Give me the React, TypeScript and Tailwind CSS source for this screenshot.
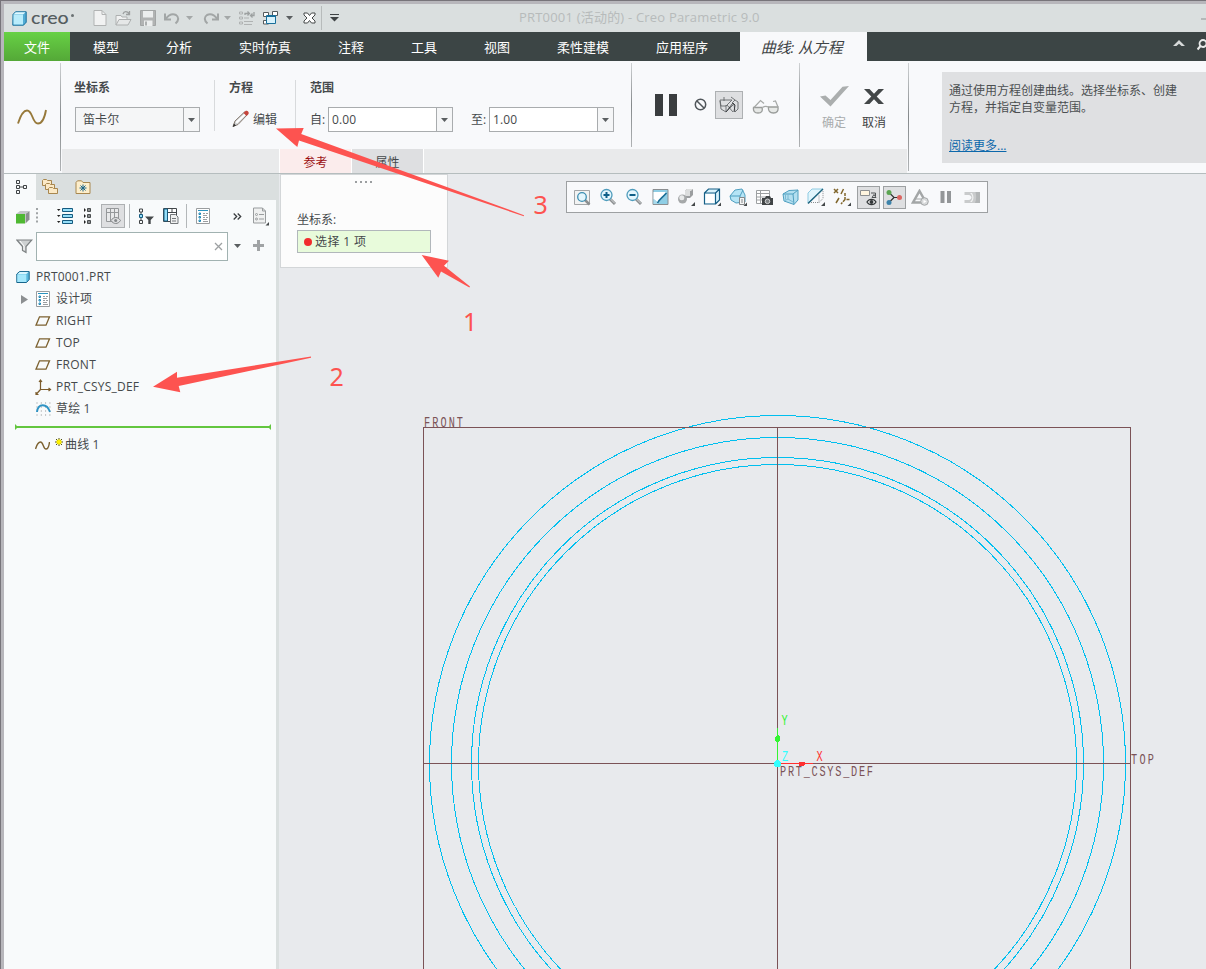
import type { ReactNode } from 'react'

type IconProps = { w: number; h: number; className?: string; children: ReactNode }

function Icon({ w, h, className = '', children }: IconProps) {
  return (
    <svg width={w} height={h} viewBox={`0 0 ${w} ${h}`} fill="none" className={`shrink-0 ${className}`}>
      {children}
    </svg>
  )
}

function Caret({ className = '', color = '#5a5e60' }: { className?: string; color?: string }) {
  return (
    <Icon w={7} h={4} className={className}>
      <path d="M0 0h7L3.500 4z" fill={color} />
    </Icon>
  )
}

function CubeIcon({ className = '' }: { className?: string }) {
  return (
    <Icon w={14} h={12} className={className}>
      <path d="M.8 3 3.500.6h9.700v7.900l-2.700 3H.8z" fill="#5bb9dd" stroke="#17658c" />
      <path d="M1.300 3.300h9v7.700h-9z" fill="#a5e8fc" />
      <path d="M1.600 3 3.800 1.100h8.700L10.300 3z" fill="#d8f6ff" />
    </Icon>
  )
}

function DesignListIcon({ className = '' }: { className?: string }) {
  return (
    <Icon w={14} h={16} className={className}>
      <path d="M.5.5h13v15H.5z" fill="#fff" stroke="#9a9d9f" />
      <path d="M2 2.5h10" stroke="#2b93bf" />
      <path d="M3 5h1.500v1.500H3zM3 8.500h1.500V10H3zM3 12h1.500v1.500H3z" stroke="#1c86b5" />
      <path d="M7 5.500h2m1 0h2M7 7.500h4M7 9.500h2m1 0h2M7 11.500h4M7 13.500h5" stroke="#9a9ea1" />
    </Icon>
  )
}

function PlaneIcon() {
  return (
    <Icon w={16} h={10}>
      <path d="M4.500.8h10L11 9.200H1z" stroke="#7c6130" strokeWidth="1.300" />
    </Icon>
  )
}

function Magnifier({ sign }: { sign: string }) {
  return (
    <Icon w={18} h={18}>
      <path d="m11 11 5 5" stroke="#8c8f91" strokeWidth="3" />
      <path d="m11.500 11 4.500 4.500" stroke="#d9dbdc" />
      <circle cx="7.500" cy="7" r="5.500" fill="#e4f6fd" stroke="#4f9cbc" strokeWidth="1.300" />
      <path d={sign} stroke="#0f5f88" strokeWidth="2" />
    </Icon>
  )
}

const MENU = ['模型', '分析', '实时仿真', '注释', '工具', '视图', '柔性建模', '应用程序']

function TitleBar() {
  return (
    <div className="relative flex h-7 shrink-0 items-center bg-[#dadfdf]">
      <Icon w={15} h={15} className="ml-2">
        <path d="M1 3.500 3.500.8h10.700v10.400l-2.700 3H.8z" fill="#52acd4" stroke="#176f9c" />
        <path d="M1.500 3.500h9.500v10H1.500z" fill="#b9ecfb" />
        <path d="M1.600 3.200 3.800 1.200h9.700l-2.200 2z" fill="#e0f8ff" />
      </Icon>
      <span className="ml-[4px] w-[42px] origin-left scale-x-[1.09] font-['Lato',sans-serif] text-[18px] leading-[18px] -mt-[3px] font-medium text-[#555d5f]">creo</span>
      <i className="-ml-[2px] -mt-[6px] size-[3px] rounded-full bg-[#6b7274]" />
      <Icon w={14} h={16} className="ml-[19px]">
        <path d="M1 .5h8l4 4v11H1z" fill="#f1f2f2" stroke="#b1b3b3" />
        <path d="M9 .5v4h4" stroke="#b1b3b3" />
      </Icon>
      <Icon w={17} h={17} className="ml-[8px]">
        <path d="M1 15V5.500h5l1 1.500h5v3" fill="#f0f1f1" stroke="#adb0b0" />
        <path d="m1 15 3-5.500h12L13 15z" fill="#e5e7e7" stroke="#adb0b0" />
        <path d="M8 4c1-3 4-3 6-.5M14.500 1v3.500H11" stroke="#9c9f9f" strokeWidth="1.300" />
      </Icon>
      <Icon w={16} h={16} className="ml-[8px]">
        <path d="M.5.5h15v15H.5z" fill="#b1b3b3" stroke="#a2a5a5" />
        <path d="M3 1h10v6.500H3zM4 10.500h8.500V16H4z" fill="#eceeee" />
        <path d="M6 11.500v4" stroke="#979a9a" strokeWidth="1.500" />
      </Icon>
      <Icon w={17} h={14} className="ml-[8px] mt-[2px]">
        <path d="M1 1.500v6h6M1.500 7C5 2.500 9 1.500 12 3c3 2 3 5.500-.5 8.500" stroke="#a2a6a6" strokeWidth="2" />
      </Icon>
      <Caret className="ml-[5px]" color="#a4a8a8" />
      <Icon w={17} h={14} className="ml-[9px] mt-[2px]">
        <path d="M16 1.500v6h-6M15.500 7C12 2.500 8 1.500 5 3c-3 2-3 5.500.5 8.500" stroke="#a2a6a6" strokeWidth="2" />
      </Icon>
      <Caret className="ml-[5px]" color="#a4a8a8" />
      <Icon w={17} h={16} className="ml-[8px]">
        <path d="M.5 2h3v2h-3zM.5 7h3v2h-3zM.5 12h3v2h-3z" stroke="#b0b3b3" />
        <path d="M5 8h5M5 11.500h9M5 14.500h8" stroke="#b0b3b3" />
        <path d="M6 5V3.500h4M8.500 1.500l2 2-2 2M15 2v3.500h-3M13.500 3.500l-2 2 2 2" stroke="#9da1a1" strokeWidth="1.300" />
      </Icon>
      <Icon w={16} h={16} className="ml-[7px]">
        <path d="M.5 2.500h5v4h-5zM9.500 1.500h5v4h-5zM.5 10.500h5V14h-5z" fill="#fff" stroke="#555a5c" />
        <path d="M3.500 5.500h9v8h-9z" fill="#d8f2fc" stroke="#186f9a" />
        <path d="M3.500 6.500h9" stroke="#186f9a" />
      </Icon>
      <Caret className="ml-[7px]" />
      <Icon w={13} h={12} className="ml-[10px]">
        <path d="M1 1h3.500l2 2.500L8.500 1H12v2L9 6l3 3v2H8.500l-2-2.500-2 2.500H1V9l3-3-3-3z" fill="#fff" stroke="#454949" />
      </Icon>
      <i className="ml-[5px] h-[24px] w-px bg-[#b7bbbb]" />
      <Icon w={9} h={8} className="ml-[8px]">
        <path d="M0 .5h9" stroke="#3e4244" />
        <path d="M0 3h9L4.500 7.500z" fill="#3e4244" />
      </Icon>
      <span className="ml-[180px] whitespace-nowrap text-[13px] tracking-[0.2px] text-[#b7bbbb]">PRT0001 (活动的) - Creo Parametric 9.0</span>
      <i className="ml-auto mt-[2px] h-[2px] w-[5px] bg-[#b4b8b8]" />
    </div>
  )
}

function MenuBar() {
  return (
    <div className="flex h-[29px] shrink-0 items-center bg-[#3c4545] text-[13px] text-white">
      <div className="flex h-full w-[66px] items-center justify-center bg-linear-to-b from-[#67d145] to-[#54a837] pt-[2px]">文件</div>
      <div className="-ml-[0.5px] flex pt-[2px]">
        {MENU.map(item => (
          <span key={item} className="px-[23.5px] whitespace-nowrap">{item}</span>
        ))}
      </div>
      <div className="ml-[8px] flex h-full w-[127px] items-center justify-center bg-[#f8f9fb] pt-[2px] pr-[3px] text-[15px] tracking-[-0.1px] whitespace-nowrap text-[#3e4345] italic">曲线: 从方程</div>
      <Icon w={12} h={6} className="-mt-[7px] ml-auto">
        <path d="M0 6 6 0l6 6H8.500L6 3.800 3.500 6z" fill="#d6d9d9" />
      </Icon>
      <Icon w={9} h={12} className="-mt-[3px] ml-[12px]">
        <circle cx="6" cy="4.500" r="3.500" stroke="#e8eaea" strokeWidth="1.800" />
        <path d="M3.500 7 .5 10.500" stroke="#e8eaea" strokeWidth="2.200" />
      </Icon>
    </div>
  )
}

function Combo({ value, className }: { value: string; className: string }) {
  return (
    <div className={`flex h-[25px] w-[125px] items-center border border-[#a9acae] ${className}`}>
      <span className="flex-1 tracking-[0.1px]">{value}</span>
      <span className="flex h-full w-[16px] items-center justify-center border-l border-[#a9acae] bg-[#f5f6f7]">
        <Caret />
      </span>
    </div>
  )
}

function Ribbon() {
  return (
    <div className="flex h-[113px] shrink-0 border-b border-[#b5bdbe] bg-[#f8f9fb] text-[12px] text-[#45494b]">
      <div className="flex w-[56px] items-center justify-center">
        <Icon w={30} h={16}>
          <path d="M1 14.500C4 5 6.500 1.500 10 1.500c6 0 5 13 11 13 4 0 6.500-5 8-13.500" stroke="#97793a" strokeWidth="1.900" />
        </Icon>
      </div>
      <i className="mt-[2px] h-[108px] w-px bg-linear-to-b from-[#cfd2d4] via-[#85898b] to-[#b0b3b5]" />
      <div className="ml-px flex w-[845px] flex-col">
        <div className="flex h-[88px]">
          <div className="ml-[13px] w-[139px] pt-[17px]">
            <div className="mb-[11px] h-[18px] leading-[20px] font-bold -ml-px">坐标系</div>
            <Combo value="笛卡尔" className="bg-[#f5f6f7] pl-[7px]" />
          </div>
          <i className="mt-[19px] h-[51px] w-px bg-[#d8dadc]" />
          <div className="ml-[14px] w-[66px] pt-[17px]">
            <div className="mb-[11px] h-[18px] leading-[20px] font-bold">方程</div>
            <div className="flex h-[25px] items-center">
              <Icon w={18} h={18} className="ml-[3px] -mt-px">
                <path d="m1 16.500 2-5.500L12.500 2l3 2.500-9.500 10z" fill="#d2d4d5" stroke="#85796f" />
                <path d="m3.500 12 9-8.500 1.500 1.200-9 8.800z" fill="#fff" />
                <path d="m11.500 3 2-2c1.500-.8 4 1 3 3l-2 2z" fill="#c5453c" />
                <path d="m.7 17 1.300-3.500 2 2z" fill="#333" />
              </Icon>
              <span className="ml-[3px]">编辑</span>
            </div>
          </div>
          <i className="mt-[19px] h-[51px] w-px bg-[#d8dadc]" />
          <div className="ml-[14px] w-[321px] pt-[17px]">
            <div className="mb-[11px] h-[18px] leading-[20px] font-bold">范围</div>
            <div className="flex items-center">
              <span className="w-[18px]">自:</span>
              <Combo value="0.00" className="bg-white pl-[3px]" />
              <span className="ml-[18px] w-[18px]">至:</span>
              <Combo value="1.00" className="bg-white pl-[3px]" />
            </div>
          </div>
          <i className="mt-[2px] h-[84px] w-px bg-linear-to-b from-[#cfd2d4] via-[#85898b] to-[#b0b3b5]" />
          <div className="flex w-[167px] items-center">
            <Icon w={22} h={22} className="ml-[23px] -mt-px">
              <path d="M0 0h8v22H0zM14 0h8v22h-8z" fill="#3a3d3f" />
            </Icon>
            <Icon w={13} h={13} className="ml-[17px] -mt-px">
              <circle cx="6.500" cy="6.500" r="5.200" stroke="#50565a" strokeWidth="1.500" />
              <path d="m3 3 7 7" stroke="#50565a" strokeWidth="1.500" />
            </Icon>
            <div className="ml-[8px] flex size-7 items-center justify-center border border-[#adb0b2] bg-[#dedfe1]">
              <Icon w={20} h={18}>
                <path d="M1 4h12l-6 6H2zM1 5l1 8 5 3V9M7 16l8-8M8 9l6 7M15 8l1 8 3-3V6l-3-2-3 3M5 1v4M12 1l4 3" stroke="#65696b" strokeWidth=".9" />
                <path d="m7 16 7-9 2 2-1 7" stroke="#33373a" strokeWidth=".9" />
              </Icon>
            </div>
            <Icon w={28} h={16} className="ml-[9px] mt-[4px]">
              <path d="M1.500 8.500h8.500c1 3.500-.5 5.500-4 5.500s-5-2-4.500-5.500zM16.500 8h9.500c.5 4-1 6-4.500 6s-5.500-2-5-6z" fill="#e6e8e6" stroke="#9a9d9b" strokeWidth="1.300" />
              <path d="M10.500 8.500c2-1.500 4-1.500 6-.5M2 8.500 8.500 1.500l3.500 3M26 8l-2.500-6-2.500.5" stroke="#a5a8a6" strokeWidth="1.200" />
            </Icon>
          </div>
          <i className="mt-[2px] h-[84px] w-px bg-linear-to-b from-[#cfd2d4] via-[#85898b] to-[#b0b3b5]" />
          <div className="ml-[20px] mt-[25px] flex w-[28px] flex-col items-center text-[#a9acad]">
            <Icon w={29} h={21}>
              <path d="m0 10.500 5.500-1L10.500 14 22.500.8 29 0 10.500 20.500z" fill="#abaeae" />
            </Icon>
            <span className="mt-[7px] leading-[18px]">确定</span>
          </div>
          <div className="ml-[12px] mt-[25px] flex w-[28px] flex-col items-center text-[#3e4244]">
            <Icon w={20} h={21}>
              <path d="M0 3h5.500L10 7.800 14.500 3H20l-7.300 7.500L20 18h-5.500L10 13.200 5.500 18H0l7.300-7.500z" fill="#434748" />
            </Icon>
            <span className="mt-[7px] leading-[18px]">取消</span>
          </div>
        </div>
        <div className="flex h-6 bg-[#e9eaeb]">
          <div className="ml-[217px] flex w-[73px] items-center justify-center border-x border-white bg-[#fbecec] pt-[3px] text-[#9c0f10]">参考</div>
          <div className="flex w-[72px] items-center justify-center border-r border-white bg-[#dedfe1] pt-[3px]">属性</div>
        </div>
      </div>
      <i className="ml-px mt-[2px] h-[108px] w-px bg-linear-to-b from-[#cfd2d4] via-[#85898b] to-[#b0b3b5]" />
      <div className="ml-[33px] mt-[11px] h-[91px] flex-1 bg-[#dfe0e2] pl-[7px] pt-[10px] leading-[17px] text-[#4b4f51]">
        <p className="w-[232px]">通过使用方程创建曲线。选择坐标系、创建<br />方程，并指定自变量范围。</p>
        <a className="mt-[21px] inline-block text-[#0c68ab] underline">阅读更多...</a>
      </div>
    </div>
  )
}

function TreeToolbar() {
  return (
    <>
      <div className="flex h-[26px] bg-[#dadfdf]">
        <div className="flex w-8 items-center bg-[#f8fafb] pl-3">
          <Icon w={12} h={16}>
            <path d="M.5 1.500h3v3h-3zM.5 6.500h3v3h-3zM.5 11.500h3v3h-3zM7.500 6.500h3v3h-3zM4 8h3" stroke="#3f4345" />
          </Icon>
        </div>
        <Icon w={17} h={17} className="ml-[6px] mt-[5px]">
          {[0, 4, 8].map(d => (
            <path key={d} d={`M${d * 0.75 + 0.5} ${d + 1.5}l1-1h3l1 1h4v5h-9z`} fill="#fbe9c6" stroke="#a8874f" />
          ))}
        </Icon>
        <Icon w={16} h={14} className="ml-[16px] mt-[6px]">
          <path d="M1 2.500 2.500.8h4L8 2.500h7v11H1z" fill="#fdeecb" stroke="#a8874f" />
          <path d="M8 4.500v7M4.500 8h7M5.500 5.500l5 5M10.500 5.500l-5 5" stroke="#1a6488" />
        </Icon>
      </div>
      <div className="flex h-[32px] items-center">
        <Icon w={14} h={14} className="ml-[12px] mt-[2px]">
          <path d="M0 4h9v9.500H0z" fill="#4fb832" />
          <path d="m0 4 4-3h9.500L9 4z" fill="#c3c6c6" />
          <path d="m9.500 4 4-3v8.500l-4 4z" fill="#8b8e8e" />
        </Icon>
        <Icon w={2} h={16} className="ml-[6px]">
          <path d="M1 0v16" stroke="#a0a4a6" strokeWidth="2" strokeDasharray="2 2.200" />
        </Icon>
        <Icon w={16} h={16} className="ml-[19px]">
          <path d="M0 1h3.500L1.700 3zM0 7h3.500L1.700 9zM0 13h3.500L1.700 15z" fill="#222" />
          <path d="M5.500.500h10v3h-10zM5.500 6.500h10v3h-10zM5.500 12.500h10v3h-10z" fill="#95def8" stroke="#155a7f" />
        </Icon>
        <Icon w={9} h={16} className="ml-[10px]">
          <path d="M1 0l2 2-2 2zM1 6l2 2-2 2zM1 12l2 2-2 2z" fill="#222" />
          <path d="M4.500.500h3v3h-3zM4.500 6.500h3v3h-3zM4.500 12.500h3v3h-3z" fill="#8b8e90" stroke="#4a4e50" />
        </Icon>
        <div className="ml-[9px] flex size-6 items-center justify-center border border-[#adb0b2] bg-[#dedfe1]">
          <Icon w={16} h={16}>
            <path d="M1.500.500h12v13h-12z" fill="#e8e9ea" stroke="#95989a" />
            <path d="M1.500 4.500h12M5.500.500v13M9.500.500v13" stroke="#95989a" />
            <path d="M6 12.500c2.500-4 7-4 9.500 0-2.500 4-7 4-9.500 0z" fill="#dedfe1" stroke="#85888a" />
            <circle cx="10.700" cy="12.500" r="1.500" fill="#85888a" />
          </Icon>
        </div>
        <i className="ml-[4px] h-6 w-px bg-[#b3b7b9]" />
        <Icon w={16} h={17} className="ml-[8px]">
          <path d="M1.500 1h3v3h-3zM1.500 12.500h3v3h-3zM3 4v8" stroke="#3f4345" />
          <path d="M1.500 6.500h3v3h-3z" fill="#95def8" stroke="#155a7f" />
          <path d="M7 8.500h9l-3.300 3.500v4h-2.400v-4z" fill="#44484a" />
        </Icon>
        <Icon w={16} h={16} className="ml-[9px]">
          <path d="M.5.500h13v13H.500z" fill="#fff" stroke="#42474a" />
          <path d="M1 1h3.500v12H1z" fill="#95def8" stroke="#155a7f" />
          <path d="M5 4.500h8M9 1v3" stroke="#42474a" />
          <path d="M7.500 6.500h5l2.500 2.500v6.500H7.500z" fill="#f0f1f1" stroke="#73777a" />
          <path d="M9 10.500h4M9 13h4" stroke="#73777a" />
        </Icon>
        <i className="ml-[7px] h-6 w-px bg-[#b3b7b9]" />
        <DesignListIcon className="ml-[9px]" />
        <Icon w={9} h={7} className="ml-[23px]">
          <path d="m.7.500 3 3-3 3M4.700.500l3 3-3 3" stroke="#3a3e40" strokeWidth="1.300" />
        </Icon>
        <Icon w={17} h={19} className="ml-[10px]">
          <path d="M1.500 1h9l3 3v12h-12z" fill="#eff0f0" stroke="#999c9e" />
          <path d="M10.500 1v3h3" stroke="#999c9e" />
          <circle cx="4.500" cy="7.500" r="1" stroke="#999c9e" />
          <circle cx="4.500" cy="12" r="1" stroke="#999c9e" />
          <path d="M7 7.500h5M7 12h5" stroke="#999c9e" />
          <path d="M17 15v3.500h-3.500z" fill="#44484a" />
        </Icon>
      </div>
      <div className="flex h-[29px] items-center">
        <Icon w={17} h={15} className="ml-[12px]">
          <path d="M.8 1h15L10 7.500v6l-3.500-2v-4z" fill="#ced1d2" stroke="#7c8082" strokeWidth="1.200" />
          <path d="m4 2 4 5v4" stroke="#fff" />
        </Icon>
        <div className="ml-[3px] flex h-[29px] w-[192px] items-center justify-end border border-[#a1b2b1] bg-white pr-[4px]">
          <Icon w={9} h={9}>
            <path d="m1 1 7 7M8 1 1 8" stroke="#9da0a2" strokeWidth="1.300" />
          </Icon>
        </div>
        <Caret className="-mt-px ml-[6px]" />
        <Icon w={11} h={11} className="-mt-[2px] ml-[12px]">
          <path d="M5.500 0v11M0 5.500h11" stroke="#a0a3a5" strokeWidth="3" />
        </Icon>
      </div>
    </>
  )
}

function ModelTree() {
  return (
    <div className="flex w-[275px] shrink-0 flex-col border-r-[3px] border-[#dadfdf] bg-[#f8fafb] text-[12px] text-[#45494b]">
      <TreeToolbar />
      <div className="mt-[5px] flex flex-col">
        <div className="flex h-[22px] items-center">
          <CubeIcon className="ml-[12px] mr-[6px]" />
          <span className="tracking-[0.15px]">PRT0001.PRT</span>
        </div>
        <div className="flex h-[22px] items-center">
          <Icon w={8} h={9} className="ml-[17px] mr-[7px]">
            <path d="M0 0v9l7-4.500z" fill="#8c8f91" />
          </Icon>
          <DesignListIcon />
          <span className="ml-[6px]">设计项</span>
        </div>
        {['RIGHT', 'TOP', 'FRONT'].map(name => (
          <div key={name} className="flex h-[22px] items-center gap-[5px] pl-[31px]">
            <PlaneIcon />
            <span className="tracking-[0.3px]">{name}</span>
          </div>
        ))}
        <div className="flex h-[22px] items-center gap-[4px] pl-[31px]">
          <Icon w={17} h={17}>
            <path d="M5.500 1v9.500H15M5.500 10.500l-4.500 5M4 3l1.500-2L7 3M13.500 9l2 1.500-2 1.500M1 13v2.500h2.500" stroke="#7c5c2c" strokeWidth="1.200" />
          </Icon>
          <span className="tracking-[0.2px]">PRT_CSYS_DEF</span>
        </div>
        <div className="flex h-[22px] items-center gap-[5px] pl-[32px]">
          <Icon w={15} h={14}>
            <path d="M.5 1h14M.5 5h14M.5 9h14M.5 13h14" stroke="#8b8f91" strokeDasharray="1 3.300" />
            <path d="M1 10C2 1 11 1 14 10" stroke="#2f93c4" strokeWidth="1.900" />
          </Icon>
          <span className="tracking-[0.15px]">草绘 1</span>
        </div>
        <Icon w={256} h={6} className="ml-[11px] mt-[4px]">
          <path d="M0 3h256" stroke="#63c63f" strokeWidth="2" />
          <path d="M0 0l3 3-3 3zM256 0l-3 3 3 3z" fill="#63c63f" />
        </Icon>
        <div className="mt-[4px] flex h-[22px] items-center pl-[31px]">
          <Icon w={15} h={9}>
            <path d="M.5 8C2 3 3.500 1 5.500 1 8.500 1 8 8 11 8c2 0 3-3 3.500-7" stroke="#7c6130" strokeWidth="1.400" />
          </Icon>
          <Icon w={8} h={8} className="-mt-[6px] ml-[5px]">
            <path d="M4 0v8M0 4h8M1 1l6 6M7 1 1 7" stroke="#4b4a20" />
            <path d="M1.500 2.500h5v3h-5zM2.500 1.500h3v5h-3z" fill="#fff200" />
          </Icon>
          <span className="ml-[2px] tracking-[0.15px]">曲线 1</span>
        </div>
      </div>
    </div>
  )
}

// in-graphics toolbar, one 26px cell per button
function ViewToolbar() {
  return (
    <div className="absolute left-[287px] top-[7px] grid h-[32px] w-[422px] grid-cols-[repeat(16,26px)] place-items-center border border-[#9da0a2] bg-[#f8f9fb] pl-[2px]">
      <Icon w={17} h={17}>
        <path d="M.5 1.500h15v14H.500z" fill="#f2f3f3" stroke="#a3a6a8" />
        <path d="m11 11 4.500 4.500" stroke="#8c8f91" strokeWidth="2.500" />
        <circle cx="8" cy="8" r="4.300" fill="#e4f6fd" stroke="#3d8fb3" strokeWidth="1.300" />
      </Icon>
      <Magnifier sign="M7.500 4v6M4.500 7h6" />
      <Magnifier sign="M4.500 7h6" />
      <Icon w={17} h={16}>
        <path d="M1 .5h15v15H1z" fill="#8fcee5" stroke="#8b8e90" />
        <path d="M1.500 3H14L6 13.500 1.500 10z" fill="#fff" />
        <path d="M1.500 10c2 1 3 2 4.500 5H1.500z" fill="#a9daec" />
        <path d="M5.500 14c2-4 4-4.500 9-10" stroke="#1b6e96" strokeWidth="1.600" />
      </Icon>
      <Icon w={18} h={18}>
        <path d="m8 3 2-2h6v6l-3 3H9z" fill="#9b9ea0" />
        <path d="M8 3l2-2h6l-2 2zM8 3h5v5H8z" fill="#dcdede" />
        <circle cx="5.500" cy="11" r="4.500" fill="#a5a8a9" />
        <circle cx="4.800" cy="9.800" r="2.500" fill="#e8eaea" />
        <path d="M18 14v4h-4z" fill="#44484a" />
      </Icon>
      <Icon w={18} h={18}>
        <path d="M1.500 5h11v11h-11zM1.500 5l4-4h11v11l-4 4M12.500 5l4-4" fill="#d8f3fd" stroke="#165f86" strokeWidth="1.200" />
        <path d="M2.500 6h9v9h-9z" fill="#fff" />
        <path d="M18 14.500v3.500h-3.500z" fill="#44484a" />
      </Icon>
      <Icon w={18} h={18}>
        <path d="m1 8 5-6 7-1 3 6v7l-9 1-5-3z" fill="#b5e4f5" stroke="#4f9fc0" />
        <path d="M1 8h10l3-6M11 8v7" stroke="#4f9fc0" />
        <path d="M10.500 9.500h5v7h-5z" fill="#f4f5f5" stroke="#85888a" />
        <path d="M12 12h2M12 14h2" stroke="#85888a" />
        <path d="M18 14.500v3.500h-3.500z" fill="#44484a" />
      </Icon>
      <Icon w={17} h={17}>
        <path d="M.5 1.500h13v13H.500zM.500 4.500h13M.500 8h13M.500 11h13M4.500 1.500v13" fill="#fff" stroke="#9da0a2" />
        <path d="M6 9h3l1-2h4l1 2h2v7H6z" fill="#404446" />
        <circle cx="11.500" cy="12.300" r="2.300" fill="#7d8183" stroke="#d2d4d5" />
      </Icon>
      <Icon w={17} h={17}>
        <path d="m1 5 6-3.500 9-.5v10l-4 4.500L2 12z" fill="#b3dff0" stroke="#4f9fc0" />
        <path d="M1 5h10l5-4M11 5l1 10.500" stroke="#4f9fc0" />
        <path d="M3.500 5v5.500M6 5v5l5 3M6 10l-4 2" stroke="#7cbad4" />
      </Icon>
      <Icon w={18} h={18}>
        <path d="m1 5 4-4h11L1 15z" fill="#e1f5fc" stroke="#8fcbe2" />
        <path d="M4 14.500h8V7M12 14.500l4-4V3" stroke="#8b8f91" strokeDasharray="1 1" />
        <path d="M1 15.500 16 1" stroke="#22667f" strokeWidth="1.500" />
        <path d="M18 14v4h-4z" fill="#44484a" />
      </Icon>
      <Icon w={18} h={18}>
        <path d="m1 1 4 4M5 1 1 5M10.500 1 8 6M6 10l-3 5" stroke="#80662c" strokeWidth="1.500" />
        <path d="M12 5v6.500h4.500M12 11.500 8 16" stroke="#80662c" strokeWidth="1.500" strokeDasharray="3 1" />
        <path d="M18 14.500v3.500h-3.500z" fill="#44484a" />
      </Icon>
      <div className="flex size-[23px] items-center justify-center border border-[#9da0a2] bg-[#dedfe1]">
        <Icon w={18} h={17}>
          <path d="M1.500 1.500h9v5h-9z" fill="#fff5df" stroke="#8c8f91" />
          <path d="M12 4h4.500v3M15 5.500l-2 3h4z" stroke="#4e5254" />
          <path d="M8 13c2-3.500 7-3.500 9 0-2 3.500-7 3.500-9 0z" fill="#fff" stroke="#34383a" strokeWidth="1.300" />
          <circle cx="12.500" cy="13" r="2" fill="#34383a" />
        </Icon>
      </div>
      <div className="flex size-[23px] items-center justify-center border border-[#9da0a2] bg-[#dedfe1]">
        <Icon w={18} h={17}>
          <path d="m4 3.500 5 5H14M9 8.500l-5 5" stroke="#333" strokeWidth="1.200" />
          <circle cx="4" cy="3.500" r="2.500" fill="#5ba552" />
          <circle cx="14.500" cy="8.500" r="2.500" fill="#dc6562" />
          <circle cx="4" cy="13.500" r="2.500" fill="#3d83aa" />
        </Icon>
      </div>
      <Icon w={18} h={17}>
        <path d="M8.500 2 15 13.500H2z" stroke="#a3a6a7" strokeWidth="2.500" />
        <path d="M5 10h8" stroke="#a3a6a7" />
        <circle cx="13.500" cy="12.500" r="3.800" fill="#d7d9da" stroke="#a3a6a7" />
        <path d="m12.500 10.700 3 1.800-3 1.800z" fill="#fff" />
      </Icon>
      <Icon w={12} h={12}>
        <path d="M.5 0h4v12h-4zM7 0h4v12H7z" fill="#939698" />
      </Icon>
      <Icon w={17} h={13}>
        <path d="M.5 1h15.500v11H.5V9h4c4-.5 4-4.500 0-5h-4z" fill="#c9cbcc" />
        <path d="M8 2c2 3 2 6 0 9h-2c3-2 3-7 0-9z" fill="#f1f2f2" />
        <path d="M11.500 1H16v11h-5c1.500-4 1.500-7 .5-11z" fill="#b3b6b7" />
      </Icon>
    </div>
  )
}

type CadLabelProps = { x: number; y: number; width: number; color?: string; children: string }

// tall, narrow stroke lettering; width is the span of the whole label
function CadLabel({ x, y, width, color = '#7b5357', children }: CadLabelProps) {
  return (
    <text transform={`translate(${x} ${y}) scale(0.82 1.22)`} textLength={width / 0.82} fill={color}>
      {children}
    </text>
  )
}

function Graphics() {
  return (
    <div className="relative flex-1 overflow-hidden bg-[#e8eaed]">
      <svg width={927} height={795} viewBox="279 174 927 795" fill="none" className="block" shapeRendering="crispEdges">
        <g stroke="#00bfef">
          {[348, 326, 306, 299].map(r => (
            <circle key={r} cx="777.500" cy="763.500" r={r} />
          ))}
        </g>
        <path d="M423.500 980V427.500h707V980M777.500 428v552M423 763.500h708" stroke="#7b5357" />
        <path d="M777.500 728v35" stroke="#33f433" />
        <path d="M778 763.500h35" stroke="#ff3030" />
        <path d="M777 735h2l1 2v3l-1 2h-3l-1-2v-3z" fill="#33f433" />
        <path d="M799 762h4l3 1v1l-3 2h-4z" fill="#ff3030" />
        <circle cx="777.500" cy="763.500" r="3.500" fill="#33ffff" />
        <g className="font-['Liberation_Mono',monospace] text-[12.5px]" shapeRendering="auto">
          <CadLabel x={424} y={427} width={39}>FRONT</CadLabel>
          <CadLabel x={1131} y={763.5} width={23}>TOP</CadLabel>
          <CadLabel x={780} y={776} width={93}>PRT_CSYS_DEF</CadLabel>
          <CadLabel x={781.5} y={725} width={6.2} color="#33f433">Y</CadLabel>
          <CadLabel x={816.5} y={761} width={6.2} color="#ff3030">X</CadLabel>
          <CadLabel x={782} y={761} width={6.2} color="#33ffff">Z</CadLabel>
        </g>
      </svg>
      <div className="absolute left-[1px] top-0 h-[94px] w-[168px] border border-[#d3d6d8] bg-[#fcfcfc] px-[16px] text-[12px] text-[#45494b]">
        <div className="mt-[6px] flex justify-center gap-[3px] pr-[2px]">
          {[0, 1, 2, 3].map(i => (
            <i key={i} className="size-[2px] bg-[#9b9ea0]" />
          ))}
        </div>
        <div className="mt-[28px] h-[18px] leading-[18px]">坐标系:</div>
        <div className="mt-[1px] flex h-[23px] w-[134px] items-center border border-[#b1b7bb] bg-[#e8fbdb] pl-[6px]">
          <i className="mr-[3px] size-[8px] rounded-full bg-[#f12d2d]" />
          <span className="tracking-[0.4px]">选择 1 项</span>
        </div>
      </div>
      <ViewToolbar />
    </div>
  )
}

// numbered step arrows drawn over the whole window
function StepArrows() {
  return (
    <svg width={1206} height={969} viewBox="0 0 1206 969" fill="#fd5350" className="pointer-events-none absolute left-0 top-0">
      <path d="m276 128.500 27.700-.500-2.500 6L524 215.200l-.2 1L299 140.500l-1.700 6.500z" />
      <path d="m421.700 255 27.300 5.700-5 5 26 20.800-.6 1L441 271.500l-2.700 6.200z" />
      <path d="m153 386.700 24-15v6l134-21.200v1.200L178.700 386l1.600 6.300z" />
      <g className="font-['Noto_Sans',sans-serif] text-[25px]">
        <text x="533.500" y="214">3</text>
        <text x="463" y="331">1</text>
        <text x="329.500" y="386">2</text>
      </g>
    </svg>
  )
}

export default function App() {
  return (
    <div className="relative flex h-[969px] w-[1206px] flex-col overflow-hidden border-t border-l border-[#77747a] bg-[#b7b6bb] pl-[3px] pt-[3px] font-['Open_Sans','Noto_Sans_CJK_SC',sans-serif]">
      <TitleBar />
      <MenuBar />
      <Ribbon />
      <div className="flex flex-1 overflow-hidden">
        <ModelTree />
        <Graphics />
      </div>
      <div className="pointer-events-none absolute -left-px -top-px">
        <StepArrows />
      </div>
    </div>
  )
}
